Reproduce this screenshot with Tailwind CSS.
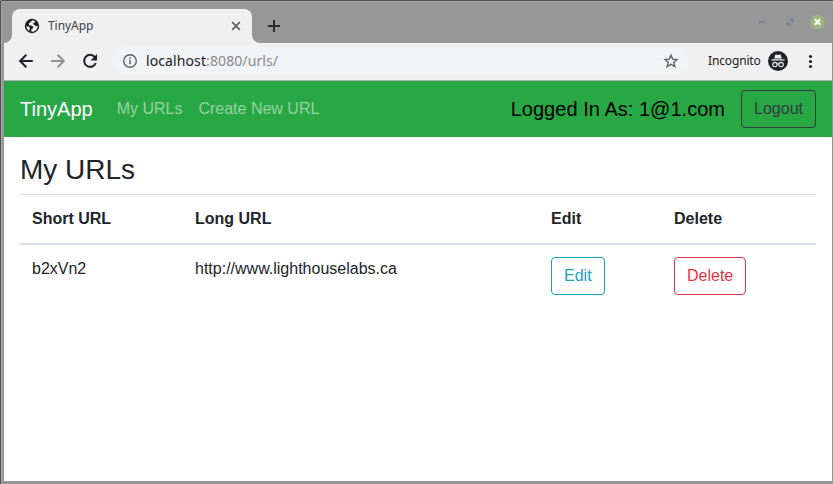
<!DOCTYPE html>
<html lang="en">
<head>
<meta charset="utf-8">
<title>TinyApp</title>
<script src="https://cdn.jsdelivr.net/npm/@tailwindcss/browser@4"></script>
</head>
<body class="w-[833px] h-[484px] overflow-hidden bg-[#979797]">
<div class="w-[833px] h-[484px] flex flex-col border-t border-l border-[#505052] rounded-tl-[3px]">
<div class="flex-1 flex flex-col border-t border-l border-t-[#a9a9a9] border-l-[#aaa6a4] pl-[2px] pr-px pb-[3px] rounded-tl-[2px] font-['Noto_Sans',sans-serif]">
  <!-- tab strip -->
  <header class="h-[41px] flex items-end">
    <svg class="w-2 h-2 shrink-0" viewBox="0 0 8 8"><path d="M8 0A8 8 0 0 1 0 8H8Z" fill="#f0f0f0"/></svg>
    <div class="w-[240px] h-[34px] bg-[#f0f0f0] rounded-t-lg flex items-center pl-3 pr-[10px]">
      <svg class="w-4 h-4" viewBox="0 0 16 16"><circle cx="8" cy="8" r="7.2" fill="#202124"/><path d="M8.3 2.3L6.4 4.3 5 5.2V7.2L7.4 7.6 9.4 8.8 8.6 10.8 7.2 11.2 7.6 13.8A5.9 5.9 0 0 0 13.4 9.8L13.8 8H11.6L9.8 6.6 8.6 5.8 10.8 4.6 11 3A5.8 5.8 0 0 0 8.3 2.3ZM2.3 8.2L4.6 8.4 6 9.8 5.4 11.2 5.2 13A5.8 5.8 0 0 1 2.3 8.2Z" fill="#f0f0f0"/></svg>
      <span class="ml-2 text-[12px] leading-4 tracking-[-0.05px] text-[#3c4043] flex-1">TinyApp</span>
      <svg class="w-3 h-3" viewBox="0 0 12 12" stroke="#5a5c5f" stroke-width="1.7"><path d="M2.2 2.2l7.6 7.6M9.8 2.2l-7.6 7.6"/></svg>
    </div>
    <svg class="w-2 h-2 shrink-0" viewBox="0 0 8 8"><path d="M0 0A8 8 0 0 0 8 8H0Z" fill="#f0f0f0"/></svg>
    <svg class="w-[14px] h-[14px] ml-[7px] mb-[10px]" viewBox="0 0 14 14" stroke="#2b2c2e" stroke-width="2"><path d="M7 1v12M1 7h12"/></svg>
    <div class="ml-auto flex items-center mb-[17px] mr-[8px]">
      <svg class="w-[8px] h-[8px]" viewBox="0 0 8 8"><path d="M.8 4h6.4" stroke="#7e8490" stroke-width="2"/></svg>
      <svg class="w-[8px] h-[8px] ml-[20px]" viewBox="0 0 8 8" fill="#7e8490"><path d="M2.6.8h4.8v4.8ZM.8 2.6v4.8h4.8Z"/></svg>
      <svg class="w-[16px] h-[16px] shrink-0 ml-[16px] -my-1 -mr-[2px]" viewBox="0 0 16 16"><circle cx="7.5" cy="8" r="7.2" fill="#9ab87c"/><path d="M4.8 5.3l5.4 5.4M10.2 5.3l-5.4 5.4" stroke="#fff" stroke-width="2"/></svg>
    </div>
  </header>
  <!-- toolbar -->
  <div class="h-[38px] bg-[#f0f0f0] border-b border-[#b3b3b3] flex items-center pb-px pl-[14px] pr-[14px]">
    <svg class="w-4 h-4" viewBox="0 0 16 16" fill="none" stroke="#202124" stroke-width="2"><path d="M14.8 8H2.8M8.4 1.7L2.1 8l6.3 6.3"/></svg>
    <svg class="w-4 h-4 ml-4" viewBox="0 0 16 16" fill="none" stroke="#929292" stroke-width="2"><path d="M1 8h12.2M7.6 1.7L13.9 8l-6.3 6.3"/></svg>
    <svg class="w-4 h-4 ml-4" viewBox="0 0 16 16"><path d="M12.8 4A6 6 0 1 0 13.8 10" fill="none" stroke="#202124" stroke-width="2"/><path d="M15 1v6.4H8.6Z" fill="#202124"/></svg>
    <div class="w-[576px] h-7 ml-[14px] rounded-full bg-[#f1f3f4] flex items-center pl-[10px] pr-[9px]">
      <svg class="w-4 h-4" viewBox="0 0 16 16" fill="none" stroke="#5f6368"><circle cx="8" cy="8" r="6.3" stroke-width="1.4"/><path d="M8 7.1v4.2M8 4.5V6" stroke-width="1.5"/></svg>
      <span class="ml-2 text-[14px] leading-5 tracking-[0.1px] text-[#85898d] flex-1"><span class="text-[#202124]">localhost</span>:8080/urls/</span>
      <svg class="w-4 h-4" viewBox="0 0 16 16" fill="none" stroke="#5f6368" stroke-width="1.4"><path d="M8 2.2l1.7 3.9 4.3.4-3.2 2.8 1 4.2L8 11.3l-3.8 2.2 1-4.2L2 6.5l4.3-.4Z"/></svg>
    </div>
    <span class="ml-5 text-[12px] leading-4 tracking-[-0.15px] text-[#202124]">Incognito</span>
    <svg class="w-5 h-5 ml-auto" viewBox="0 0 20 20"><circle cx="10" cy="10" r="10" fill="#202124"/><path d="M6.2 7.5L7.2 4q.3-.7 1-.4L10 4l1.8-.4q.7-.3 1 .4l1 3.5ZM3.5 8.3h13v1.1h-13Z" fill="#eee"/><g fill="none" stroke="#eee" stroke-width="1.1"><circle cx="6.9" cy="13.6" r="2.2"/><circle cx="13.1" cy="13.6" r="2.2"/><path d="M9 13.2q1-.7 2 0"/></g></svg>
    <svg class="w-4 h-4 ml-[14px]" viewBox="0 0 16 16" fill="#202124"><circle cx="8.5" cy="3.5" r="1.6"/><circle cx="8.5" cy="8.5" r="1.6"/><circle cx="8.5" cy="13.5" r="1.6"/></svg>
  </div>
  <!-- page -->
  <main class="flex-1 bg-white text-[#212529] font-['Liberation_Sans',sans-serif] text-base">
    <nav class="h-14 bg-[#28a745] px-4 flex items-center">
      <a class="text-xl text-white leading-[30px]">TinyApp</a>
      <a class="ml-6 text-white/50">My URLs</a>
      <a class="ml-4 text-white/50">Create New URL</a>
      <span class="ml-auto mr-4 text-xl leading-[30px] tracking-[0.03px] text-black">Logged In As: 1@1.com</span>
      <button class="h-[38px] px-3 border border-[#343a40] rounded text-[#343a40]">Logout</button>
    </nav>
    <div class="px-4 pt-4">
      <h3 class="text-[28px] leading-[33.6px] mb-[7.4px]">My URLs</h3>
      <table class="w-full table-fixed border-collapse text-left">
        <colgroup><col class="w-[163px]"><col class="w-[356px]"><col class="w-[123px]"><col></colgroup>
        <thead><tr class="border-t border-b-2 border-t-[#dee2e6] border-b-[#dee2e6]"><th class="p-3">Short URL</th><th class="p-3">Long URL</th><th class="p-3">Edit</th><th class="p-3">Delete</th></tr></thead>
        <tbody><tr class="align-top"><td class="p-3">b2xVn2</td><td class="p-3">http://www.lighthouselabs.ca</td>
          <td class="p-3"><button class="h-[38px] px-3 border border-[#17a2b8] rounded text-[#17a2b8]">Edit</button></td>
          <td class="p-3"><button class="h-[38px] px-3 border border-[#dc3545] rounded text-[#dc3545]">Delete</button></td></tr></tbody>
      </table>
    </div>
  </main>
</div>
</div>
</body>
</html>
